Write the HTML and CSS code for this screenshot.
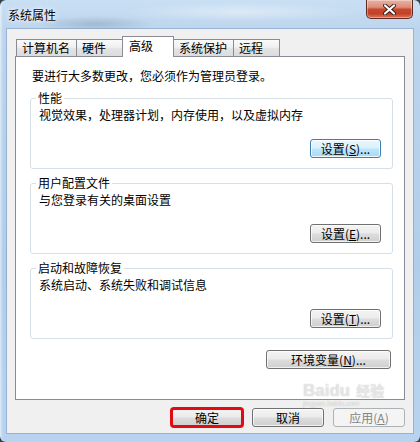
FILE: index.html
```html
<!DOCTYPE html>
<html lang="zh-CN">
<head>
<meta charset="utf-8">
<title>系统属性</title>
<link rel="stylesheet" href="styles.css">
</head>
<body>
<div class="window">
  <div class="titlebar">
    <span class="title">系统属性</span>
    <div class="close">
      <svg width="13" height="11" viewBox="0 0 13 11">
        <path d="M2 1.5 L11 9.5 M11 1.5 L2 9.5" stroke="#3b1b14" stroke-width="4" stroke-linecap="round" fill="none"/>
        <path d="M2 1.5 L11 9.5 M11 1.5 L2 9.5" stroke="#ffffff" stroke-width="2.2" stroke-linecap="round" fill="none"/>
      </svg>
    </div>
  </div>
  <div class="client">
    <div class="tabs">
      <div class="tab">计算机名</div>
      <div class="tab">硬件</div>
      <div class="tab active">高级</div>
      <div class="tab">系统保护</div>
      <div class="tab">远程</div>
    </div>
    <div class="panel">
      <p class="intro">要进行大多数更改，您必须作为管理员登录。</p>
      <fieldset class="group">
        <legend>性能</legend>
        <p class="desc">视觉效果，处理器计划，内存使用，以及虚拟内存</p>
        <div class="btn-row"><button class="btn default">设置(<u>S</u>)...</button></div>
      </fieldset>
      <fieldset class="group">
        <legend>用户配置文件</legend>
        <p class="desc">与您登录有关的桌面设置</p>
        <div class="btn-row"><button class="btn">设置(<u>E</u>)...</button></div>
      </fieldset>
      <fieldset class="group">
        <legend>启动和故障恢复</legend>
        <p class="desc">系统启动、系统失败和调试信息</p>
        <div class="btn-row"><button class="btn">设置(<u>T</u>)...</button></div>
      </fieldset>
      <div class="btn-row env"><button class="btn wide">环境变量(<u>N</u>)...</button></div>
    </div>
    <div class="footer">
      <button class="btn ok">确定</button>
      <button class="btn">取消</button>
      <button class="btn" disabled>应用(<u>A</u>)</button>
    </div>
  </div>
  <div class="watermark">
    <div class="wm-line"><span class="wm-big">Baidu</span><span class="wm-cn">经验</span></div>
    <span class="wm-url">jingyan.baidu.com</span>
  </div>
</div>
</body>
</html>
```
FILE: styles.css
```css
html, body {
  margin: 0;
  padding: 0;
  background: #34424f;
}
body {
  width: 420px;
  height: 442px;
  overflow: hidden;
  font-family: "Noto Sans CJK SC", "Noto Sans", "DejaVu Sans", sans-serif;
  font-size: 12px;
  color: #000;
}
.window {
  position: relative;
  width: 420px;
  height: 442px;
  box-sizing: border-box;
  border-radius: 6px;
  background:
    linear-gradient(90deg, rgba(255,255,255,0.55) 0, rgba(255,255,255,0) 3px),
    radial-gradient(ellipse 60px 8px at 95px 24px, rgba(120,140,165,0.4), rgba(120,140,165,0)),
    radial-gradient(ellipse 120px 10px at 240px 12px, rgba(255,255,255,0.4), rgba(255,255,255,0)),
    linear-gradient(180deg, #c9dff3 0, #bcd5ee 30px, #b0cdeb 60%, #b7d3ef 100%);
  overflow: hidden;
}
.titlebar {
  height: 29px;
  display: flex;
  justify-content: space-between;
  align-items: flex-start;
  padding: 0 7px 0 8px;
}
.title {
  padding-top: 7px;
  line-height: 16px;
  font-size: 12px;
  color: #000;
  text-shadow: 0 0 6px #fff, 0 0 3px #fff;
}
.close {
  width: 47px;
  height: 19px;
  box-sizing: border-box;
  border: 1px solid #5e2a22;
  border-top: none;
  border-radius: 0 0 5px 5px;
  background: linear-gradient(180deg, #e9b2a3 0, #dc8e7a 40%, #c8482f 52%, #c24129 75%, #d9755a 100%);
  box-shadow: inset 0 0 0 1px rgba(255,255,255,0.35);
  display: flex;
  align-items: center;
  justify-content: center;
}
.client {
  height: 404px;
  margin: 0 7px;
  box-sizing: border-box;
  padding: 7px 8px 0 8px;
  background: #f0f0f0;
  box-shadow: 0 0 0 1px rgba(110,140,175,0.45);
}
.tabs {
  display: flex;
  align-items: flex-end;
  padding-left: 1px;
  margin-bottom: -1px;
  position: relative;
  z-index: 1;
}
.tab {
  min-width: 47px;
  box-sizing: border-box;
  height: 18px;
  line-height: 16px;
  padding: 0 6px 0 5px;
  border: 1px solid #898c95;
  background: linear-gradient(180deg, #fafafa 0, #f0f0f0 45%, #e3e3e3 55%, #dcdcdc 100%);
  white-space: nowrap;
}
.tab + .tab {
  margin-left: -1px;
}
.tab.active {
  min-width: 52px;
  height: 21px;
  padding: 1px 6px 3px 6px;
  border-bottom: none;
  background: #fff;
  position: relative;
  z-index: 2;
}
.panel {
  height: 344px;
  box-sizing: border-box;
  border: 1px solid #898c95;
  background: #fff;
  padding: 11px 11px 0 14px;
}
.intro {
  margin: 0 0 0 2px;
  line-height: 16px;
}
.group {
  margin: 6px 0 0 0;
  padding: 0 11px 10px 8px;
  border: 1px solid #d5dfe5;
  border-radius: 3px;
  min-inline-size: 0;
}
.group legend {
  padding: 0 2px;
  margin-left: -3px;
  line-height: 16px;
}
.desc {
  margin: 1px 0 0 0;
  line-height: 16px;
}
.btn-row {
  display: flex;
  justify-content: flex-end;
  margin-top: 16px;
}
.btn-row.env {
  margin-top: 11px;
  margin-right: 2px;
}
.btn {
  width: 71px;
  height: 19px;
  box-sizing: border-box;
  padding: 0;
  margin: 0;
  font-family: inherit;
  font-size: 12px;
  line-height: 17px;
  color: #000;
  border: 1px solid #707070;
  border-radius: 3px;
  background: linear-gradient(180deg, #f4f4f4 0, #ebebeb 48%, #dddddd 52%, #cfcfcf 100%);
  box-shadow: inset 0 0 0 1px rgba(255,255,255,0.7);
  white-space: nowrap;
}
.btn u {
  text-decoration: underline;
  text-underline-offset: 1px;
}
.btn.default {
  border-color: #3c7fb1;
  background: linear-gradient(180deg, #eaf6fd 0, #d9f0fc 48%, #bee6fd 52%, #a7d9f5 100%);
  box-shadow: inset 0 0 0 1px rgba(255,255,255,0.8);
}
.btn.wide {
  width: 125px;
}
.btn:disabled {
  color: #838383;
  border-color: #adb2b5;
  background: #f4f4f4;
  box-shadow: none;
}
.footer {
  display: flex;
  justify-content: flex-end;
  gap: 9px;
  margin-top: 8px;
}
.footer .btn {
  width: 72px;
}
.btn.ok {
  outline: 3px solid #e10c12;
  outline-offset: -2px;
}
.watermark {
  position: absolute;
  left: 303px;
  top: 381px;
  width: 110px;
  pointer-events: none;
  color: rgba(255,255,255,0.6);
  text-shadow: 0 0 1px rgba(130,130,130,0.55);
  font-family: "Liberation Sans", sans-serif;
}
.wm-line {
  display: flex;
  align-items: baseline;
  gap: 6px;
  line-height: 18px;
}
.wm-big {
  font-size: 17px;
  font-weight: bold;
}
.wm-cn {
  font-family: "Noto Sans CJK SC", sans-serif;
  font-size: 14px;
  font-weight: bold;
}
.wm-url {
  display: block;
  font-size: 7px;
  line-height: 8px;
}
```
